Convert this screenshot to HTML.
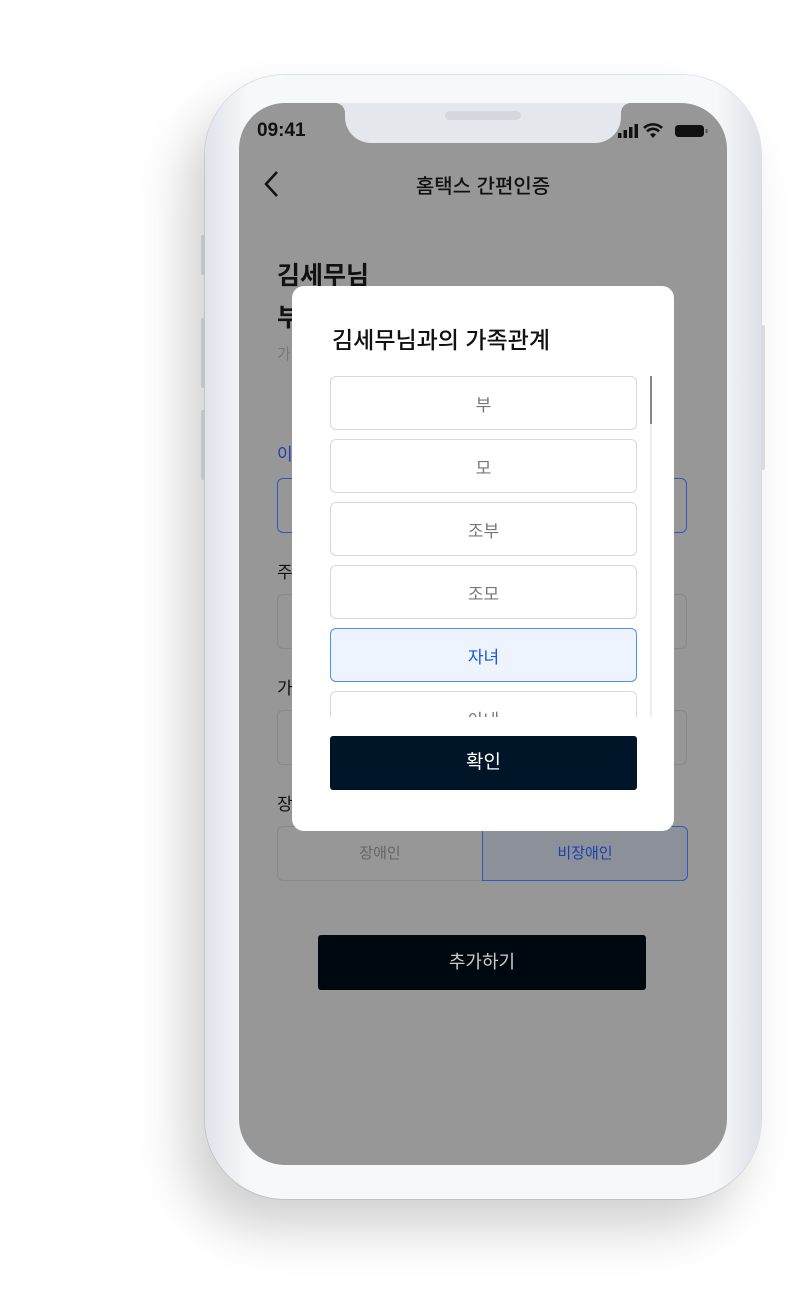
<!DOCTYPE html>
<html><head><meta charset="utf-8"><style>
*{margin:0;padding:0;box-sizing:border-box}
body{width:800px;height:1302px;background:#fff;position:relative;overflow:hidden;font-family:"Liberation Sans","Noto Sans CJK KR",sans-serif}
.abs{position:absolute}
.phone{left:205px;top:75px;width:556px;height:1124px;border-radius:80px;background:linear-gradient(90deg,#dfe3ea,#f7f8fa 8%,#f7f8fa 92%,#dde1e8);box-shadow:-20px 30px 50px rgba(0,0,0,.18),0 0 0 1px #e2e5ea}
.screen{left:239px;top:103px;width:488px;height:1062px;border-radius:46px;background:#979797;overflow:hidden}
.notch{left:106px;top:0;width:276px;height:40px;background:#e4e7ec;border-radius:0 0 26px 26px}
.box{border:1px solid #888;border-radius:6px}
.t{color:#111}
.item{position:absolute;left:38px;width:307px;height:54px;border:1px solid #d8d8d8;border-radius:6px;background:#fff;text-align:center;line-height:58px;font-size:17px;color:#777}
.btn{background:#00080f;color:#ccc;text-align:center;border-radius:3px}
</style></head><body>
<div class="abs" style="left:201px;top:235px;width:5px;height:40px;background:#e0e3e8;border-radius:2px"></div>
<div class="abs" style="left:201px;top:318px;width:5px;height:70px;background:#e0e3e8;border-radius:2px"></div>
<div class="abs" style="left:201px;top:410px;width:5px;height:70px;background:#e0e3e8;border-radius:2px"></div>
<div class="abs" style="left:760px;top:325px;width:5px;height:145px;background:#e0e3e8;border-radius:2px"></div>
<div class="abs phone"></div>
<div class="abs screen">
  <div class="abs notch"><div class="abs" style="left:100px;top:8px;width:76px;height:9px;border-radius:5px;background:#d4d8de"></div></div>
  <div class="abs" style="left:96px;top:0;width:10px;height:10px;background:radial-gradient(circle at 0 100%,transparent 10px,#e4e7ec 10px)"></div>
  <div class="abs" style="left:382px;top:0;width:10px;height:10px;background:radial-gradient(circle at 100% 100%,transparent 10px,#e4e7ec 10px)"></div>
  <div class="abs" style="left:18px;top:17px;font-size:19px;font-weight:bold;color:#111">09:41</div>
  <svg class="abs" style="left:378px;top:19px" width="92" height="18" viewBox="0 0 92 18">
    <rect x="1" y="11" width="3.5" height="5" fill="#111"/><rect x="6.5" y="8" width="3.5" height="8" fill="#111"/><rect x="12" y="5" width="3.5" height="11" fill="#111"/><rect x="17.5" y="2" width="3.5" height="14" fill="#111"/>
    <path d="M27 6a13 13 0 0 1 18 0M30 9.5a8 8 0 0 1 12 0" stroke="#111" stroke-width="2.6" fill="none"/><path d="M33 12.5l3 3.5 3-3.5a4 4 0 0 0-6 0z" fill="#111"/>
    <rect x="58" y="3" width="29" height="12" rx="3.5" fill="#111"/><rect x="88.5" y="7" width="2" height="4" fill="#555"/>
  </svg>
  <svg class="abs" style="left:22px;top:66px" width="20" height="30"><path d="M16 3L5 15l11 12" stroke="#111" stroke-width="2.5" fill="none"/></svg>
  <div class="abs t" style="left:0;width:488px;text-align:center;top:67px;font-size:20px;font-weight:500">홈택스 간편인증</div>
  <div class="abs t" style="left:38px;top:152px;font-size:25px;font-weight:bold;line-height:42px">김세무님<br>부</div>
  <div class="abs" style="left:38px;top:240px;font-size:15px;color:#777">가</div>
  <div class="abs" style="left:38px;top:337px;font-size:17px;color:#1a3fb0">이</div>
  <div class="abs box" style="left:38px;top:375px;width:410px;height:55px;border-color:#2a5cc0"></div>
  <div class="abs t" style="left:38px;top:455px;font-size:17px">주</div>
  <div class="abs box" style="left:38px;top:491px;width:410px;height:55px"></div>
  <div class="abs t" style="left:38px;top:571px;font-size:17px">가</div>
  <div class="abs box" style="left:38px;top:607px;width:410px;height:55px"></div>
  <div class="abs t" style="left:38px;top:687px;font-size:17px">장</div>
  <div class="abs box" style="left:38px;top:723px;width:206px;height:55px;border-radius:6px 0 0 6px;text-align:center;line-height:53px;font-size:15px;color:#666">장애인</div>
  <div class="abs box" style="left:243px;top:723px;width:206px;height:55px;border-radius:0 6px 6px 0;border-color:#2a5cc0;background:#8c9098;text-align:center;line-height:53px;font-size:15px;color:#1a3fb0">비장애인</div>
  <div class="abs btn" style="left:79px;top:832px;width:328px;height:55px;line-height:55px;font-size:18px">추가하기</div>
</div>
<div class="abs" style="left:292px;top:286px;width:382px;height:545px;background:#fff;border-radius:12px;overflow:hidden">
  <div class="abs" style="left:40px;top:35px;font-size:23px;color:#111;font-weight:500">김세무님과의 가족관계</div>
  <div class="abs" style="left:0;top:90px;width:382px;height:341px;overflow:hidden">
    <div class="item" style="top:0">부</div>
    <div class="item" style="top:63px">모</div>
    <div class="item" style="top:126px">조부</div>
    <div class="item" style="top:189px">조모</div>
    <div class="item" style="top:252px;background:#eef4fd;border-color:#4e8ef0;color:#1458e0">자녀</div>
    <div class="item" style="top:315px">아내</div>
    <div class="abs" style="left:358px;top:0;width:2px;height:341px;background:#eee"></div>
    <div class="abs" style="left:358px;top:0;width:2px;height:48px;background:#888"></div>
  </div>
  <div class="abs btn" style="left:38px;top:450px;width:307px;height:54px;line-height:54px;font-size:19px;background:#011528;color:#fff">확인</div>
</div>
</body></html>
